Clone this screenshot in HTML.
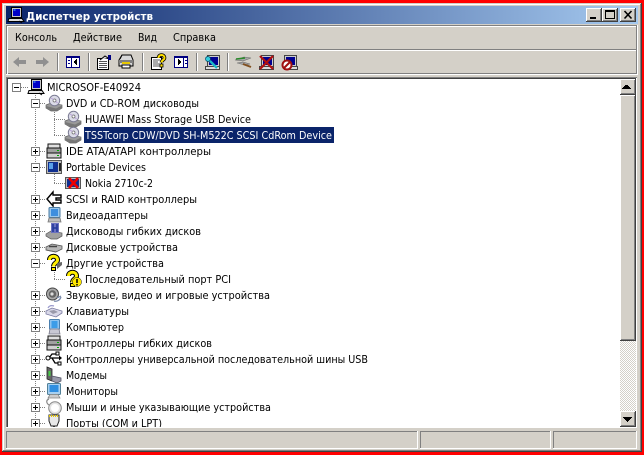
<!DOCTYPE html>
<html><head><meta charset="utf-8"><style>
html,body{margin:0;padding:0;background:#f00;width:644px;height:455px;overflow:hidden}
svg{display:block;position:absolute;left:0;top:0}
text{font-family:"DejaVu Sans","Liberation Sans",sans-serif;font-size:10.5px;fill:#000}
</style></head><body>
<svg width="644" height="455" viewBox="0 0 644 455" xmlns="http://www.w3.org/2000/svg">
<defs>
<linearGradient id="tg" x1="0" x2="1" y1="0" y2="0"><stop offset="0" stop-color="#0a246a"/><stop offset="1" stop-color="#a6caf0"/></linearGradient>
<pattern id="dith" width="2" height="2" patternUnits="userSpaceOnUse"><rect width="2" height="2" fill="#fff"/><rect width="1" height="1" fill="#d4d0c8"/><rect x="1" y="1" width="1" height="1" fill="#d4d0c8"/></pattern>
<symbol id="plus" overflow="visible"><rect x=".5" y=".5" width="8" height="8" fill="#fff" stroke="#808080"/><path d="M2 4.500h5M4.500 2v5" stroke="#000" fill="none"/></symbol>
<symbol id="minus" overflow="visible"><rect x=".5" y=".5" width="8" height="8" fill="#fff" stroke="#808080"/><path d="M2 4.500h5" stroke="#000" fill="none"/></symbol>
<symbol id="cd" overflow="visible"><path d="M0 10l5-2 11 2v3l-5 3H5l-5-3z" fill="#9a9a9a" stroke="#666" stroke-width=".7"/><path d="M0 11l10 2.500 6-3v2l-5 3H5l-5-3z" fill="#777"/><circle cx="8.500" cy="5.500" r="5.200" fill="#dcdce8" stroke="#7c7c94"/><circle cx="8.500" cy="5.500" r="1.500" fill="#fff" stroke="#666" stroke-width=".7"/><path d="M5 3l2.500 1.500M11.500 8L10 6.500" stroke="#b8a0d8"/></symbol>
<symbol id="ide" overflow="visible"><rect x="2" y="1" width="12" height="4" fill="#e0e0e0" stroke="#111"/><rect x="1" y="5" width="14" height="5" fill="#a0a0a0" stroke="#111"/><rect x="1" y="10" width="14" height="5" fill="#d0d0d0" stroke="#111"/><rect x="11" y="7" width="2" height="1" fill="#0a0"/><rect x="11" y="12" width="2" height="1" fill="#0a0"/></symbol>
<symbol id="port" overflow="visible"><rect x="0.500" y="1.500" width="15" height="13" fill="#bbb" stroke="#555"/><rect x="2" y="3" width="10" height="10" fill="#0f2f90"/><rect x="3" y="4" width="4" height="6" fill="#5aa0e8"/><rect x="13" y="4" width="2" height="8" fill="#222"/></symbol>
<symbol id="nokia" overflow="visible"><rect x="0.500" y="2.500" width="15" height="11" fill="#bbb" stroke="#555"/><rect x="2" y="4" width="12" height="8" fill="#0f2f90"/><path d="M4 3l9 10M13 3L4 13" stroke="#e00" stroke-width="2.600"/></symbol>
<symbol id="scsi" overflow="visible"><path d="M7 1L1 8l6 7v-3h8V9h-5V7h5V4H7z" fill="#fff" stroke="#000" stroke-width="1.400"/></symbol>
<symbol id="video" overflow="visible"><rect x="3" y="0.500" width="11" height="10" rx="1" fill="#9cc8ec" stroke="#4a7aa0"/><rect x="5" y="2" width="7" height="7" fill="#3e8ede"/><path d="M3 11h11l1 4H2z" fill="#bbb" stroke="#777" stroke-width=".8"/></symbol>
<symbol id="floppy" overflow="visible"><path d="M0 11l5-3 11 2v3l-5 3H5l-5-3z" fill="#a0a0a0" stroke="#555" stroke-width=".7"/><path d="M5 0h8v10H5z" fill="#6a70c0"/><path d="M7 1v8M11 1v8M7 5h4" stroke="#223a9a" stroke-width="1.600"/></symbol>
<symbol id="hdd" overflow="visible"><path d="M0 8l6-3 10 2v3l-6 3L0 11z" fill="#b8b8b8" stroke="#555" stroke-width=".8"/><path d="M3 7.500h8" stroke="#444" stroke-width="1.500"/><path d="M0 10.500l10 2v1L0 11.500z" fill="#666"/></symbol>
<symbol id="q" overflow="visible"><path d="M3.500 5c0-5 8-5 8 0 0 3-4 3-4 6.500" fill="none" stroke="#000" stroke-width="5"/><path d="M3.500 5c0-5 8-5 8 0 0 3-4 3-4 6.500" fill="none" stroke="#ffee00" stroke-width="3"/><rect x="5.500" y="12.500" width="4" height="3" fill="#ffee00" stroke="#000"/></symbol>
<symbol id="sound" overflow="visible"><circle cx="6.500" cy="7" r="6" fill="#aaa" stroke="#444"/><circle cx="6.500" cy="7" r="3.800" fill="#666"/><circle cx="6" cy="7" r="1.600" fill="#ddd"/><path d="M8 14c3 1 6-1 7-4M11 11l4-2" stroke="#78a" stroke-width="1.200" fill="none"/></symbol>
<symbol id="kbd" overflow="visible"><path d="M0 8l6-3 10 3v2l-6 4-10-3z" fill="#d8d8e8" stroke="#7878a0" stroke-width=".8"/><path d="M3 8l5-1 4 2-5 2z" fill="#99a"/><path d="M2 5c1-2 3-3 6-2" stroke="#99c" stroke-width="1.200" fill="none"/></symbol>
<symbol id="comp" overflow="visible"><rect x="3.500" y="0.500" width="10" height="10" rx="1" fill="#8fc4f0" stroke="#4a80b0"/><rect x="5.500" y="2" width="6" height="7" fill="#3b9ce8"/><path d="M4 10h9l1 5H3z" fill="#c8c8d4" stroke="#778" stroke-width=".8"/></symbol>
<symbol id="usb" overflow="visible"><path d="M0 7h14M3 7l3-4h4M6 7l3 5h3" stroke="#000" stroke-width="1.300" fill="none"/><circle cx="2" cy="7" r="2" fill="#fff" stroke="#000"/><path d="M13 4.500l3 2.500-3 2.500z" fill="#000"/><rect x="10" y="1" width="3" height="3" fill="#fff" stroke="#000"/><rect x="12" y="11" width="3" height="3" fill="#fff" stroke="#000"/></symbol>
<symbol id="modem" overflow="visible"><path d="M1 0l5 2v12l-5-2z" fill="#666" stroke="#222" stroke-width=".8"/><rect x="2.500" y="4" width="2" height="5" fill="#4c4"/><path d="M6 9l9 2v3l-4 2-5-2z" fill="#99a" stroke="#556" stroke-width=".8"/></symbol>
<symbol id="mon" overflow="visible"><rect x="1.500" y="0.500" width="13" height="11" rx="1" fill="#a8d0f0" stroke="#508098"/><rect x="3.500" y="2" width="9" height="7" fill="#2f8ee0"/><path d="M4 11.500h8l2 3.500H2z" fill="#ccc" stroke="#888" stroke-width=".8"/></symbol>
<symbol id="mouse" overflow="visible"><path d="M3 0C0 1 0 4 3 6" stroke="#888" stroke-width="1.200" fill="none"/><circle cx="9" cy="9" r="6.300" fill="#e4e4e4" stroke="#888"/><circle cx="9" cy="9" r="4" fill="#fff"/></symbol>
<symbol id="com" overflow="visible"><path d="M3 0h10v6l-2 5H5L3 6z" fill="#e8e8e8" stroke="#222"/><path d="M3 1h10" stroke="#e8c800" stroke-dasharray="1 1" stroke-width="2"/><path d="M8 11v5" stroke="#333" stroke-width="2"/></symbol>
<symbol id="pc" overflow="visible"><rect x="3.500" y="0.500" width="10" height="10" fill="#c8c8c8" stroke="#000"/><rect x="5" y="2" width="7" height="7" fill="#0000c8"/><path d="M5.500 3h2" stroke="#5cf"/><path d="M1 11.500h13l2 3H0z" fill="#ddd" stroke="#000"/><path d="M11 14l3 2" stroke="#000"/></symbol>
</defs>

<!-- window -->
<rect x="2" y="3" width="640" height="449" fill="#d4d0c8"/>
<rect x="3" y="4" width="637" height="1" fill="#fff"/>
<rect x="3" y="4" width="1" height="446" fill="#fff"/>
<rect x="640" y="4" width="1" height="447" fill="#808080"/>
<rect x="641" y="3" width="1" height="449" fill="#404040"/>
<rect x="3" y="450" width="638" height="1" fill="#808080"/>
<rect x="2" y="451" width="640" height="1" fill="#404040"/>

<!-- title -->
<rect x="6" y="6" width="632" height="18" fill="url(#tg)"/>
<use href="#pc" x="8" y="7" width="16" height="16"/>
<text x="26" y="20" textLength="127" lengthAdjust="spacingAndGlyphs" style="font-weight:bold;fill:#fff;font-size:11px">Диспетчер устройств</text>

<!-- caption buttons -->
<g shape-rendering="crispEdges">
<rect x="586" y="8" width="16" height="14" fill="#404040"/><rect x="586" y="8" width="15" height="13" fill="#fff"/><rect x="587" y="9" width="14" height="12" fill="#808080"/><rect x="587" y="9" width="13" height="11" fill="#d4d0c8"/>
<rect x="590" y="17" width="6" height="2" fill="#000"/>
<rect x="602" y="8" width="16" height="14" fill="#404040"/><rect x="602" y="8" width="15" height="13" fill="#fff"/><rect x="603" y="9" width="14" height="12" fill="#808080"/><rect x="603" y="9" width="13" height="11" fill="#d4d0c8"/>
<rect x="605.500" y="10.500" width="9" height="8" fill="none" stroke="#000"/><rect x="605" y="10" width="10" height="2" fill="#000"/>
<rect x="620" y="8" width="16" height="14" fill="#404040"/><rect x="620" y="8" width="15" height="13" fill="#fff"/><rect x="621" y="9" width="14" height="12" fill="#808080"/><rect x="621" y="9" width="13" height="11" fill="#d4d0c8"/>
</g>
<path d="M624.500 11l7 7.500M631.500 11l-7 7.500" stroke="#000" stroke-width="1.600"/>

<!-- menu band / toolbar band -->
<g shape-rendering="crispEdges">
<rect x="6" y="25" width="632" height="1" fill="#808080"/><rect x="6" y="26" width="632" height="1" fill="#fff"/>
<rect x="6" y="49" width="632" height="1" fill="#808080"/><rect x="6" y="50" width="632" height="1" fill="#fff"/>
<rect x="6" y="73" width="632" height="1" fill="#808080"/><rect x="6" y="74" width="632" height="1" fill="#fff"/>
<rect x="6" y="25" width="1" height="49" fill="#808080"/><rect x="7" y="26" width="1" height="48" fill="#fff"/>
<rect x="637" y="25" width="1" height="50" fill="#fff"/><rect x="636" y="26" width="1" height="48" fill="#808080"/>
</g>
<text x="15" y="41" textLength="42" lengthAdjust="spacingAndGlyphs">Консоль</text>
<text x="73" y="41" textLength="49" lengthAdjust="spacingAndGlyphs">Действие</text>
<text x="138" y="41" textLength="19" lengthAdjust="spacingAndGlyphs">Вид</text>
<text x="173" y="41" textLength="43" lengthAdjust="spacingAndGlyphs">Справка</text>

<!-- toolbar -->
<g shape-rendering="crispEdges">
<rect x="57" y="53" width="1" height="18" fill="#808080"/><rect x="58" y="53" width="1" height="18" fill="#fff"/>
<rect x="88" y="53" width="1" height="18" fill="#808080"/><rect x="89" y="53" width="1" height="18" fill="#fff"/>
<rect x="142" y="53" width="1" height="18" fill="#808080"/><rect x="143" y="53" width="1" height="18" fill="#fff"/>
<rect x="196" y="53" width="1" height="18" fill="#808080"/><rect x="197" y="53" width="1" height="18" fill="#fff"/>
<rect x="227" y="53" width="1" height="18" fill="#808080"/><rect x="228" y="53" width="1" height="18" fill="#fff"/>
</g>
<path d="M13 62l6-5v3h7v4h-7v3z" fill="#909090"/>
<path d="M49 62l-6-5v3h-7v4h7v3z" fill="#909090"/>
<g shape-rendering="crispEdges">
<rect x="66.500" y="56.500" width="13" height="11" fill="#fff" stroke="#000080"/><rect x="66" y="56" width="14" height="2" fill="#000080"/><rect x="71" y="56" width="1" height="12" fill="#000080"/>
<path d="M68 60h2v1h-2zM68 63h2v1h-2z" fill="#000080"/>
<path d="M77 59v6h-1v-1h-1v-1h-1v-2h1v-1h1v-1z" fill="#000"/>
<rect x="97.500" y="58.500" width="11" height="11" fill="#fff" stroke="#000"/><path d="M99 61h8v1h-8zM99 63h8v1h-8zM99 65h8v1h-8zM99 67h8v1h-8z" fill="#555"/>
<rect x="108" y="55" width="3" height="5" fill="#000080"/>
</g>
<path d="M100 60l5-4 3 2" fill="#ddd" stroke="#000"/>
<path d="M122 55h9l2 5v6h-14v-6z" fill="#d8d8d8" stroke="#000"/><path d="M119 60h14v3h-14z" fill="#808080"/><rect x="122" y="62" width="8" height="2" fill="#e8c800"/><path d="M122 55l-2 4" stroke="#000"/><rect x="122" y="65" width="8" height="3" fill="#fff" stroke="#000"/>
<rect x="151.500" y="57.500" width="10" height="12" fill="#fff" stroke="#000"/><path d="M153 60h7M153 62h5M153 64h7M153 66h7" stroke="#555"/>
<path d="M158.500 58c0-4 6-4 6 0 0 2-3 2-3 4.500" fill="none" stroke="#000" stroke-width="3.600"/><path d="M158.500 58c0-4 6-4 6 0 0 2-3 2-3 4.500" fill="none" stroke="#ffe000" stroke-width="2"/><rect x="160" y="64" width="3" height="3" fill="#ffe000" stroke="#000" stroke-width=".8"/>
<g shape-rendering="crispEdges">
<rect x="174.500" y="56.500" width="13" height="11" fill="#fff" stroke="#000080"/><rect x="174" y="56" width="14" height="2" fill="#000080"/><rect x="183" y="56" width="1" height="12" fill="#000080"/>
<path d="M185 60h2v1h-2zM185 63h2v1h-2z" fill="#000080"/>
<path d="M178 59v6h1v-1h1v-1h1v-2h-1v-1h-1v-1z" fill="#000"/>
<rect x="207.500" y="55.500" width="12" height="11" fill="#ccc" stroke="#444"/><rect x="209" y="57" width="9" height="8" fill="#000090"/>
<rect x="205.500" y="66.500" width="14" height="3" fill="#ddd" stroke="#444"/>
</g>
<path d="M206 57l11 11" stroke="#19b8c8" stroke-width="2.400"/><circle cx="208" cy="59" r="2.500" fill="#3cd" stroke="#046" stroke-width=".7"/>
<path d="M235 60l9-3 7 1-8 3zM237 63l6-1 7 2-5 1z" fill="#a8a8a8" stroke="#666" stroke-width=".6"/><path d="M236 59l9-1" stroke="#2a8a2a" stroke-width="1.500"/><path d="M243 64l8 3" stroke="#805020" stroke-width="2"/>
<g shape-rendering="crispEdges"><rect x="261.500" y="55.500" width="12" height="11" fill="#ccc" stroke="#444"/><rect x="263" y="57" width="9" height="8" fill="#000090"/><rect x="259.500" y="66.500" width="14" height="3" fill="#ddd" stroke="#444"/></g>
<path d="M260 56l13 13M273 56l-13 13" stroke="#b01010" stroke-width="2.200"/>
<g shape-rendering="crispEdges"><rect x="284.500" y="55.500" width="12" height="11" fill="#ccc" stroke="#444"/><rect x="286" y="57" width="9" height="8" fill="#000090"/><rect x="284.500" y="66.500" width="13" height="3" fill="#ddd" stroke="#444"/></g>
<circle cx="287" cy="65" r="4.500" fill="#fff" stroke="#a01010" stroke-width="2"/><path d="M284 68l6-6" stroke="#a01010" stroke-width="2"/>

<!-- tree pane -->
<g shape-rendering="crispEdges">
<rect x="6" y="77" width="631" height="1" fill="#808080"/><rect x="7" y="78" width="629" height="1" fill="#404040"/>
<rect x="6" y="77" width="1" height="351" fill="#808080"/><rect x="7" y="78" width="1" height="349" fill="#404040"/>
<rect x="8" y="79" width="612" height="348" fill="#fff"/>
<rect x="620" y="79" width="16" height="348" fill="url(#dith)"/>
<rect x="6" y="427" width="631" height="1" fill="#fff"/><rect x="636" y="78" width="1" height="350" fill="#fff"/>
</g>

<svg x="8" y="79" width="612" height="348" viewBox="8 79 612 348" overflow="hidden">
<!-- dotted lines -->
<g stroke="#808080" stroke-dasharray="1 1" fill="none" shape-rendering="crispEdges">
<path d="M35.500 95V430M54.500 110V135M54.500 174V183M54.500 270V279"/>
<path d="M21 87.500H28M40 103.500H46M54 119.500H65M54 135.500H65M40 151.500H46M40 167.500H46M54 183.500H65M40 199.500H46M40 215.500H46M40 231.500H46M40 247.500H46M40 263.500H46M54 279.500H65M40 295.500H46M40 311.500H46M40 327.500H46M40 343.500H46M40 359.500H46M40 375.500H46M40 391.500H46M40 407.500H46M40 423.500H46"/>
</g>
<g>
<use href="#minus" x="12" y="83"/>
<use href="#minus" x="31" y="99"/>
<use href="#plus" x="31" y="147"/>
<use href="#minus" x="31" y="163"/>
<use href="#plus" x="31" y="195"/>
<use href="#plus" x="31" y="211"/>
<use href="#plus" x="31" y="227"/>
<use href="#plus" x="31" y="243"/>
<use href="#minus" x="31" y="259"/>
<use href="#plus" x="31" y="291"/>
<use href="#plus" x="31" y="307"/>
<use href="#plus" x="31" y="323"/>
<use href="#plus" x="31" y="339"/>
<use href="#plus" x="31" y="355"/>
<use href="#plus" x="31" y="371"/>
<use href="#plus" x="31" y="387"/>
<use href="#plus" x="31" y="403"/>
<use href="#plus" x="31" y="419"/>
</g>
<!-- icons -->
<use href="#pc" x="28" y="79" width="16" height="16"/>
<use href="#cd" x="46" y="95" width="16" height="16"/>
<use href="#cd" x="65" y="111" width="16" height="16"/>
<use href="#cd" x="65" y="127" width="16" height="16"/>
<use href="#ide" x="46" y="143" width="16" height="16"/>
<use href="#port" x="46" y="159" width="16" height="16"/>
<use href="#nokia" x="65" y="175" width="16" height="16"/>
<use href="#scsi" x="46" y="191" width="16" height="16"/>
<use href="#video" x="46" y="207" width="16" height="16"/>
<use href="#floppy" x="46" y="223" width="16" height="16"/>
<use href="#hdd" x="46" y="239" width="16" height="16"/>
<use href="#q" x="46" y="255" width="16" height="16"/>
<path d="M57 263l5-1v3l-5 4z" fill="#666"/>
<use href="#q" x="65" y="271" width="16" height="16"/>
<circle cx="77" cy="282" r="4.500" fill="#ffe800" stroke="#111" stroke-width=".5"/><path d="M77 279v4M77 284v1.500" stroke="#000" stroke-width="1.500"/>
<use href="#sound" x="46" y="287" width="16" height="16"/>
<use href="#kbd" x="46" y="303" width="16" height="16"/>
<use href="#comp" x="46" y="319" width="16" height="16"/>
<use href="#ide" x="46" y="335" width="16" height="16"/>
<use href="#usb" x="46" y="351" width="16" height="16"/>
<use href="#modem" x="46" y="367" width="16" height="16"/>
<use href="#mon" x="46" y="383" width="16" height="16"/>
<use href="#mouse" x="46" y="399" width="16" height="16"/>
<use href="#com" x="46" y="415" width="16" height="16"/>
<!-- selection -->
<rect x="84" y="127" width="250" height="16" fill="#0a246a" shape-rendering="crispEdges"/>
<!-- labels -->
<text x="47" y="91" textLength="94" lengthAdjust="spacingAndGlyphs">MICROSOF-E40924</text>
<text x="66" y="107" textLength="133" lengthAdjust="spacingAndGlyphs">DVD и CD-ROM дисководы</text>
<text x="85" y="123" textLength="166" lengthAdjust="spacingAndGlyphs">HUAWEI Mass Storage USB Device</text>
<text x="85" y="139" textLength="247" lengthAdjust="spacingAndGlyphs" style="fill:#fff">TSSTcorp CDW/DVD SH-M522C SCSI CdRom Device</text>
<text x="66" y="155" textLength="145" lengthAdjust="spacingAndGlyphs">IDE ATA/ATAPI контроллеры</text>
<text x="66" y="171" textLength="80" lengthAdjust="spacingAndGlyphs">Portable Devices</text>
<text x="85" y="187" textLength="68" lengthAdjust="spacingAndGlyphs">Nokia 2710c-2</text>
<text x="66" y="203" textLength="131" lengthAdjust="spacingAndGlyphs">SCSI и RAID контроллеры</text>
<text x="66" y="219" textLength="82" lengthAdjust="spacingAndGlyphs">Видеоадаптеры</text>
<text x="66" y="235" textLength="135" lengthAdjust="spacingAndGlyphs">Дисководы гибких дисков</text>
<text x="66" y="251" textLength="112" lengthAdjust="spacingAndGlyphs">Дисковые устройства</text>
<text x="66" y="267" textLength="98" lengthAdjust="spacingAndGlyphs">Другие устройства</text>
<text x="85" y="283" textLength="146" lengthAdjust="spacingAndGlyphs">Последовательный порт PCI</text>
<text x="66" y="299" textLength="204" lengthAdjust="spacingAndGlyphs">Звуковые, видео и игровые устройства</text>
<text x="66" y="315" textLength="63" lengthAdjust="spacingAndGlyphs">Клавиатуры</text>
<text x="66" y="331" textLength="58" lengthAdjust="spacingAndGlyphs">Компьютер</text>
<text x="66" y="347" textLength="146" lengthAdjust="spacingAndGlyphs">Контроллеры гибких дисков</text>
<text x="66" y="363" textLength="302" lengthAdjust="spacingAndGlyphs">Контроллеры универсальной последовательной шины USB</text>
<text x="66" y="379" textLength="41" lengthAdjust="spacingAndGlyphs">Модемы</text>
<text x="66" y="395" textLength="52" lengthAdjust="spacingAndGlyphs">Мониторы</text>
<text x="66" y="411" textLength="205" lengthAdjust="spacingAndGlyphs">Мыши и иные указывающие устройства</text>
<text x="66" y="427" textLength="96" lengthAdjust="spacingAndGlyphs">Порты (COM и LPT)</text>
</svg>

<!-- scrollbar -->
<g shape-rendering="crispEdges">
<rect x="620" y="79" width="16" height="16" fill="#404040"/><rect x="620" y="79" width="15" height="15" fill="#fff"/><rect x="621" y="80" width="14" height="14" fill="#808080"/><rect x="621" y="80" width="13" height="13" fill="#d4d0c8"/>
<path d="M627 85h1v1h1v1h1v1h1v1h-9v-1h1v-1h1v-1h1v-1h1z" fill="#000"/>
<rect x="620" y="95" width="16" height="246" fill="#404040"/><rect x="620" y="95" width="15" height="245" fill="#fff"/><rect x="621" y="96" width="14" height="244" fill="#808080"/><rect x="621" y="96" width="13" height="243" fill="#d4d0c8"/>
<rect x="620" y="411" width="16" height="16" fill="#404040"/><rect x="620" y="411" width="15" height="15" fill="#fff"/><rect x="621" y="412" width="14" height="14" fill="#808080"/><rect x="621" y="412" width="13" height="13" fill="#d4d0c8"/>
<path d="M623 417h9v1h-1v1h-1v1h-1v1h-1v1h-1v-1h-1v-1h-1v-1h-1v-1h-1z" fill="#000"/>
</g>

<!-- status bar -->
<g shape-rendering="crispEdges" fill="none">
<path d="M6.500 448V431.500H417" stroke="#808080"/><path d="M417.500 431V448.500H6" stroke="#fff"/>
<path d="M420.500 448V431.500H550" stroke="#808080"/><path d="M550.500 431V448.500H420" stroke="#fff"/>
<path d="M553.500 448V431.500H636" stroke="#808080"/><path d="M636.500 431V448.500H553" stroke="#fff"/>
</g>
</svg>
</body></html>
